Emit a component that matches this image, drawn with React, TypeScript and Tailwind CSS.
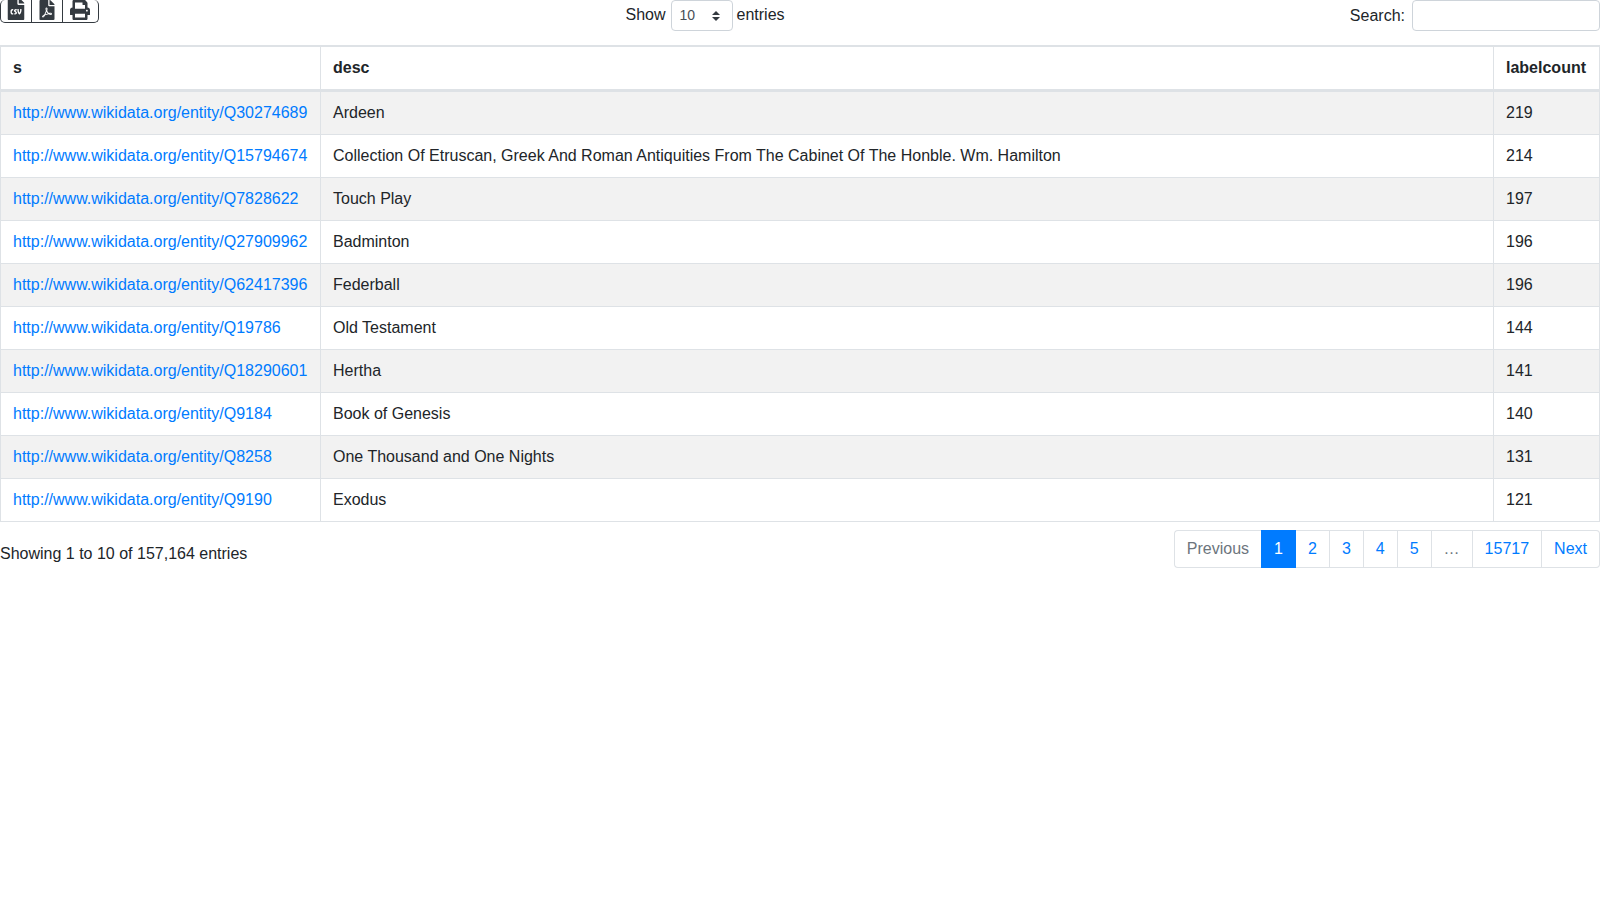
import { FaFileCsv, FaFilePdf, FaPrint } from "react-icons/fa";

const rows = [
  ["http://www.wikidata.org/entity/Q30274689", "Ardeen", "219"],
  ["http://www.wikidata.org/entity/Q15794674", "Collection Of Etruscan, Greek And Roman Antiquities From The Cabinet Of The Honble. Wm. Hamilton", "214"],
  ["http://www.wikidata.org/entity/Q7828622", "Touch Play", "197"],
  ["http://www.wikidata.org/entity/Q27909962", "Badminton", "196"],
  ["http://www.wikidata.org/entity/Q62417396", "Federball", "196"],
  ["http://www.wikidata.org/entity/Q19786", "Old Testament", "144"],
  ["http://www.wikidata.org/entity/Q18290601", "Hertha", "141"],
  ["http://www.wikidata.org/entity/Q9184", "Book of Genesis", "140"],
  ["http://www.wikidata.org/entity/Q8258", "One Thousand and One Nights", "131"],
  ["http://www.wikidata.org/entity/Q9190", "Exodus", "121"],
];

const pages = ["2", "3", "4", "5"];

export default function App() {
  return (
    <div className="min-h-[900px] bg-white text-[16px] leading-6 text-[#212529] font-['Liberation_Sans',Arial,sans-serif]">
      <div className="grid h-[45px] grid-cols-[411px_588px_1fr] items-start">
        <div className="flex">
          <div className="flex h-[23px] overflow-hidden rounded-[5px] border border-t-0 border-[#343a40] text-[#343a40]">
            <button className="flex w-[31px] items-end justify-center border-r border-[#343a40] pb-[2px] text-[22px]"><FaFileCsv /></button>
            <button className="flex w-[31px] items-end justify-center border-r border-[#343a40] pb-[2px] text-[20px]"><FaFilePdf /></button>
            <button className="flex w-[35px] items-end justify-center pb-[2px] pr-[1px] text-[20px]"><FaPrint /></button>
          </div>
        </div>
        <div className="flex h-[31px] items-center justify-center">
          <span className="pb-[1px]">Show</span>
          <div className="ml-[5px] mr-[4px] flex h-[31px] w-[62px] items-center justify-between rounded-[4px] border border-[#ced4da] pl-2 pr-[12px] text-[14px] text-[#495057]">
            <span className="pb-[1px]">10</span>
            <svg width="8" height="10" viewBox="0 0 4 5">
              <path fill="#343a40" d="M2 0 0 2h4zm0 5L0 3h4z" />
            </svg>
          </div>
          <span className="pb-[1px]">entries</span>
        </div>
        <div className="flex h-[31px] items-center justify-end gap-[7px]">
          <span>Search:</span>
          <input type="text" className="h-[31px] w-[188px] rounded-[4px] border border-[#ced4da] bg-white" />
        </div>
      </div>

      <table className="w-full table-fixed border-collapse border border-[#dee2e6]">
        <colgroup>
          <col className="w-[320px]" />
          <col />
          <col className="w-[106px]" />
        </colgroup>
        <thead>
          <tr>
            <th className="border border-t-2 border-b-[3px] border-[#dee2e6] px-3 py-[9px] text-left font-bold">s</th>
            <th className="border border-t-2 border-b-[3px] border-[#dee2e6] px-3 py-[9px] text-left font-bold">desc</th>
            <th className="border border-t-2 border-b-[3px] border-[#dee2e6] px-3 py-[9px] text-left font-bold">labelcount</th>
          </tr>
        </thead>
        <tbody>
          {rows.map((r, i) => (
            <tr key={r[0]} className={i % 2 === 0 ? "bg-[#f2f2f2]" : "bg-white"}>
              <td className="border border-[#dee2e6] px-3 py-[9px]">
                <a href="#" className="text-[#007bff]">{r[0]}</a>
              </td>
              <td className="border border-[#dee2e6] px-3 py-[9px]">{r[1]}</td>
              <td className="border border-[#dee2e6] px-3 py-[9px]">{r[2]}</td>
            </tr>
          ))}
        </tbody>
      </table>

      <div className="flex items-start justify-between pt-[8px]">
        <div className="pt-[12px]">Showing 1 to 10 of 157,164 entries</div>
        <div className="flex h-[38px]">
          <span className="flex items-center rounded-l-[4px] border-y border-l border-[#dee2e6] px-3 text-[#6c757d]">Previous</span>
          <span className="flex items-center border border-[#007bff] bg-[#007bff] px-3 text-white">1</span>
          {pages.map((p) => (
            <a key={p} href="#" className="flex items-center border-y border-r border-[#dee2e6] px-3 text-[#007bff]">{p}</a>
          ))}
          <span className="flex items-center border-y border-r border-[#dee2e6] px-3 text-[#6c757d]">…</span>
          <a href="#" className="flex items-center border-y border-r border-[#dee2e6] px-3 text-[#007bff]">15717</a>
          <a href="#" className="flex items-center rounded-r-[4px] border-y border-r border-[#dee2e6] px-3 text-[#007bff]">Next</a>
        </div>
      </div>
    </div>
  );
}
